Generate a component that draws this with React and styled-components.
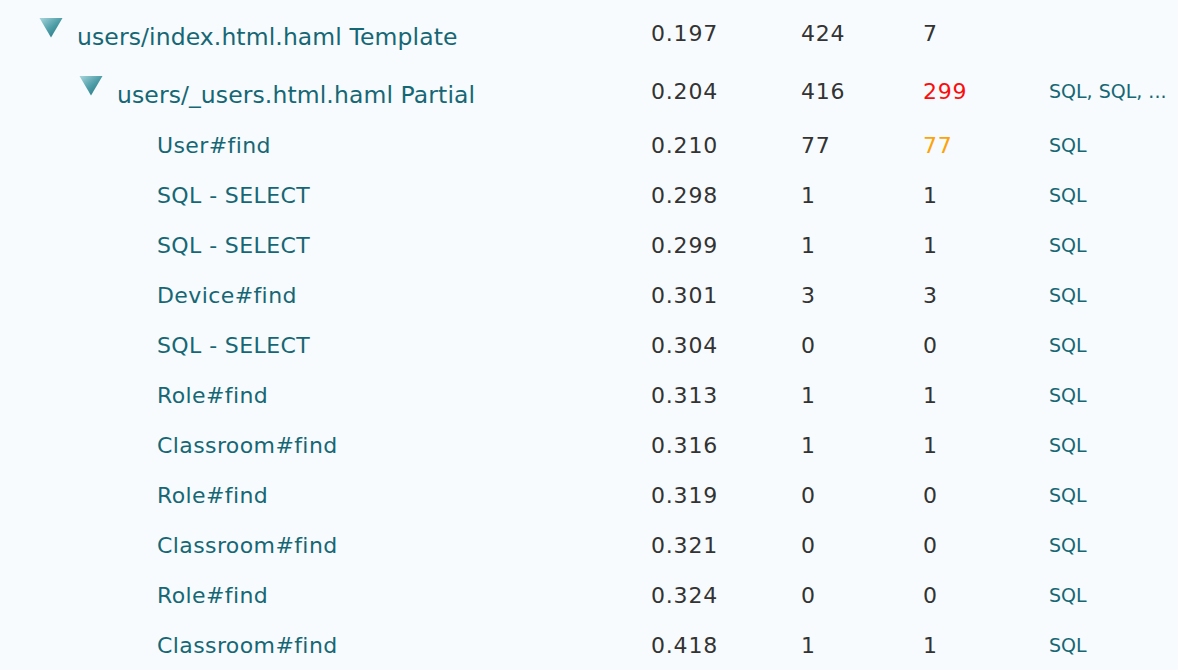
import styled, { createGlobalStyle } from "styled-components";

const GlobalStyle = createGlobalStyle`
  html, body {
    margin: 0;
    padding: 0;
    background: #f7fbfd;
  }
  body {
    font-family: "DejaVu Sans", "Liberation Sans", sans-serif;
  }
`;

const rows = [
  { depth: 0, open: true, name: "users/index.html.haml Template", time: "0.197", dur: "424", child: "7" },
  { depth: 1, open: true, name: "users/_users.html.haml Partial", time: "0.204", dur: "416", child: "299", level: "hot", sql: "SQL, SQL, ..." },
  { depth: 2, name: "User#find", time: "0.210", dur: "77", child: "77", level: "warm", sql: "SQL" },
  { depth: 2, name: "SQL - SELECT", time: "0.298", dur: "1", child: "1", sql: "SQL" },
  { depth: 2, name: "SQL - SELECT", time: "0.299", dur: "1", child: "1", sql: "SQL" },
  { depth: 2, name: "Device#find", time: "0.301", dur: "3", child: "3", sql: "SQL" },
  { depth: 2, name: "SQL - SELECT", time: "0.304", dur: "0", child: "0", sql: "SQL" },
  { depth: 2, name: "Role#find", time: "0.313", dur: "1", child: "1", sql: "SQL" },
  { depth: 2, name: "Classroom#find", time: "0.316", dur: "1", child: "1", sql: "SQL" },
  { depth: 2, name: "Role#find", time: "0.319", dur: "0", child: "0", sql: "SQL" },
  { depth: 2, name: "Classroom#find", time: "0.321", dur: "0", child: "0", sql: "SQL" },
  { depth: 2, name: "Role#find", time: "0.324", dur: "0", child: "0", sql: "SQL" },
  { depth: 2, name: "Classroom#find", time: "0.418", dur: "1", child: "1", sql: "SQL" },
];

const levelColors = {
  hot: "#fb0d0d",
  warm: "#fca30a",
};

const Tree = styled.div`
  padding: 8px 0 0 40px;
`;

// the nested partial row sits a little apart from its neighbours
const Row = styled.div`
  display: grid;
  grid-template-columns: 611px 150px 122px 126px 1fr;
  align-items: center;
  height: 50px;
  margin: ${(p) => (p.$depth === 1 ? "8px 0 4px" : "0")};
`;

const NameCell = styled.div`
  display: flex;
  align-items: flex-start;
  padding-left: ${(p) => p.$depth * 40}px;
  padding-top: ${(p) => (p.$open ? "8px" : "0")};
`;

const Toggle = styled.svg`
  flex: none;
  width: 24px;
  height: 21px;
  margin: -6px 14px 0 -1px;
`;

const Spacer = styled.span`
  flex: none;
  width: 37px;
`;

const Name = styled.span`
  font-size: ${(p) => (p.$open ? "23.5px" : "22px")};
  letter-spacing: ${(p) => (p.$open ? "0.1px" : "0.4px")};
  color: #166775;
  white-space: nowrap;
`;

const Num = styled.span`
  font-size: 22px;
  letter-spacing: 0.8px;
  color: ${(p) => levelColors[p.$level] || "#333333"};
`;

const SqlLink = styled.span`
  font-size: 19px;
  color: #166775;
  white-space: nowrap;
`;

const Arrow = () => (
  <Toggle viewBox="0 0 24 21">
    <defs>
      <linearGradient id="tri" x1="0" y1="0" x2="1" y2="1">
        <stop offset="0" stopColor="#a9d6dc" />
        <stop offset="0.5" stopColor="#4e9ea8" />
        <stop offset="1" stopColor="#1d6b77" />
      </linearGradient>
    </defs>
    <path d="M0.5 1 L23.5 1 L12 20.5 Z" fill="url(#tri)" />
  </Toggle>
);

export default function App() {
  return (
    <>
      <GlobalStyle />
      <Tree>
        {rows.map((r, i) => (
          <Row key={i} $depth={r.depth}>
            <NameCell $depth={r.depth} $open={r.open}>
              {r.open ? <Arrow /> : <Spacer />}
              <Name $open={r.open}>{r.name}</Name>
            </NameCell>
            <Num>{r.time}</Num>
            <Num>{r.dur}</Num>
            <Num $level={r.level}>{r.child}</Num>
            <SqlLink>{r.sql}</SqlLink>
          </Row>
        ))}
      </Tree>
    </>
  );
}
